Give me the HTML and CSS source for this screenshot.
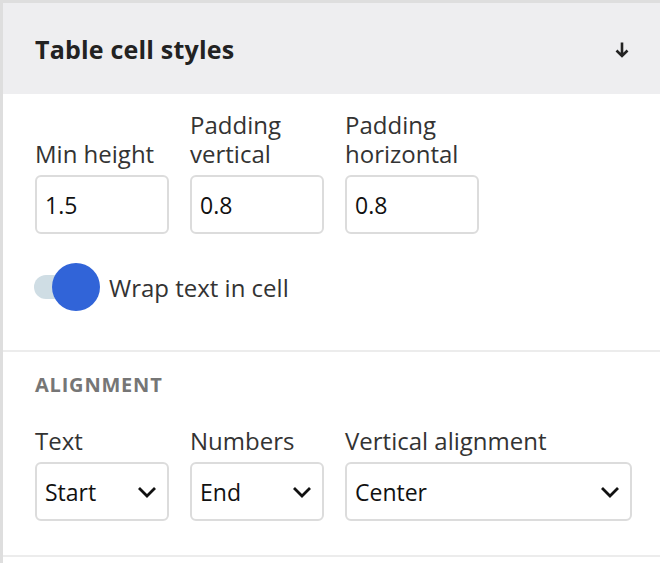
FILE: index.html
```html
<!DOCTYPE html>
<html>
<head>
<meta charset="utf-8">
<link rel="stylesheet" href="styles.css">
</head>
<body>
<div class="panel">
  <div class="header">
    <h2 class="title">Table cell styles</h2>
    <svg class="arrow" width="14" height="17" viewBox="0 0 14 17"><path d="M7 1.5 V15 M1.5 9.5 L7 15 L12.5 9.5" fill="none" stroke="#222" stroke-width="2.6"/></svg>
  </div>
  <div class="section first">
    <div class="grid">
      <label class="field"><span class="lbl">Min height</span><span class="input">1.5</span></label>
      <label class="field"><span class="lbl">Padding vertical</span><span class="input">0.8</span></label>
      <label class="field"><span class="lbl">Padding horizontal</span><span class="input">0.8</span></label>
    </div>
    <div class="toggle-row">
      <span class="toggle"><span class="track"></span><span class="knob"></span></span>
      <span class="toggle-label">Wrap text in cell</span>
    </div>
  </div>
  <div class="section second">
    <div class="heading">Alignment</div>
    <div class="grid">
      <label class="field"><span class="lbl">Text</span><span class="input select">Start<svg class="chev" width="20" height="12" viewBox="0 0 20 12"><path d="M2 2 L10 10 L18 2" fill="none" stroke="#111" stroke-width="2.8"/></svg></span></label>
      <label class="field"><span class="lbl">Numbers</span><span class="input select">End<svg class="chev" width="20" height="12" viewBox="0 0 20 12"><path d="M2 2 L10 10 L18 2" fill="none" stroke="#111" stroke-width="2.8"/></svg></span></label>
      <label class="field wide"><span class="lbl">Vertical alignment</span><span class="input select">Center<svg class="chev" width="20" height="12" viewBox="0 0 20 12"><path d="M2 2 L10 10 L18 2" fill="none" stroke="#111" stroke-width="2.8"/></svg></span></label>
    </div>
  </div>
</div>
</body>
</html>
```
FILE: styles.css
```css
html, body {
  margin: 0;
  padding: 0;
  background: #fff;
  font-family: "Open Sans", "Noto Sans", sans-serif;
  color: #333;
}
.panel {
  border-top: 3px solid #dedede;
  border-left: 3px solid #dedede;
  min-height: 563px;
  box-sizing: border-box;
}
.header {
  background: #eeeef0;
  height: 91px;
  display: flex;
  align-items: center;
  justify-content: space-between;
  padding: 0 31px 0 32px;
}
.title {
  margin: 0;
  font-size: 25px;
  font-weight: 700;
  color: #222;
  letter-spacing: 0.2px;
}
.arrow { display: block; margin-top: 2px; }
.section {
  padding: 0 32px;
  border-bottom: 2px solid #ececec;
}
.section.first {
  padding-top: 16px;
  height: 258px;
  box-sizing: border-box;
}
.section.second {
  padding-top: 19px;
  height: 205px;
  box-sizing: border-box;
}
.grid {
  display: grid;
  grid-template-columns: 134px 134px 134px;
  column-gap: 21px;
  align-items: end;
}
.field {
  display: flex;
  flex-direction: column;
}
.field.wide { width: 287px; }
.lbl {
  font-size: 24px;
  line-height: 29px;
  color: #333;
  margin-bottom: 7px;
}
.input {
  display: flex;
  align-items: center;
  justify-content: space-between;
  height: 59px;
  box-sizing: border-box;
  border: 2px solid #dcdcdc;
  border-radius: 6px;
  padding: 0 9px 0 8px;
  font-size: 23px;
  color: #111;
}
.select { padding-right: 10px; }
.chev { display: block; }
.toggle-row {
  display: flex;
  align-items: center;
  margin-top: 29px;
  gap: 9px;
}
.toggle {
  position: relative;
  width: 65px;
  height: 48px;
  display: block;
}
.track {
  position: absolute;
  left: -1px;
  top: 12px;
  width: 50px;
  height: 24px;
  border-radius: 12px;
  background: #cfdde4;
}
.knob {
  position: absolute;
  left: 17px;
  top: 0;
  width: 48px;
  height: 48px;
  border-radius: 50%;
  background: #3164d8;
}
.toggle-label {
  font-size: 24px;
  color: #333;
}
.heading {
  text-transform: uppercase;
  font-size: 20px;
  font-weight: 700;
  color: #767676;
  letter-spacing: 0.8px;
  margin-bottom: 28px;
}
```
